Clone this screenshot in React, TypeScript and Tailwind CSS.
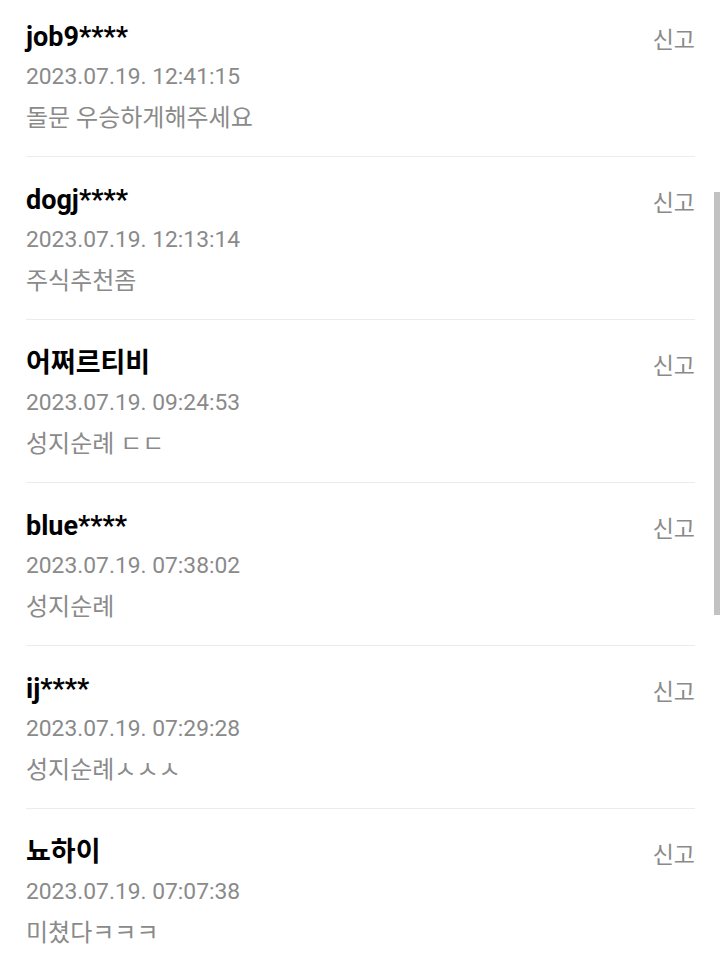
import React from 'react';

interface Comment {
    id: number;
    author: string;
    date: string;
    body: string;
}

const comments: Comment[] = [
    { id: 1, author: 'job9****', date: '2023.07.19. 12:41:15', body: '돌문 우승하게해주세요' },
    { id: 2, author: 'dogj****', date: '2023.07.19. 12:13:14', body: '주식추천좀' },
    { id: 3, author: '어쩌르티비', date: '2023.07.19. 09:24:53', body: '성지순례 ㄷㄷ' },
    { id: 4, author: 'blue****', date: '2023.07.19. 07:38:02', body: '성지순례' },
    { id: 5, author: 'ij****', date: '2023.07.19. 07:29:28', body: '성지순례ㅅㅅㅅ' },
    { id: 6, author: '뇨하이', date: '2023.07.19. 07:07:38', body: '미쳤다ㅋㅋㅋ' },
];

export default function App() {
    return (
        <div className="relative w-[720px] h-[964px] overflow-hidden bg-white font-['Roboto','Noto_Sans_CJK_KR',sans-serif]">
            <ul className="pl-[26px] pr-[25px]">
                {comments.map((c, i) => (
                    <li
                        key={c.id}
                        className={`flex justify-between border-b border-[#ececec] pb-[21px] ${i === 0 ? 'pt-[20px]' : 'pt-[26px]'}`}
                    >
                        <div className="flex flex-col">
                            <span className="text-[27px] leading-[34px] font-bold text-black">{c.author}</span>
                            <span className="mt-[6px] text-[22.8px] leading-[34px] text-[#8a8a8a]">{c.date}</span>
                            <span className="mt-[7px] text-[24px] leading-[34px] text-[#8a8a8a]">{c.body}</span>
                        </div>
                        <button className="self-start mt-[4px] text-[23px] leading-[34px] text-[#8a8a8a]">신고</button>
                    </li>
                ))}
            </ul>
            {/* scroll thumb */}
            <div className="absolute right-0 top-[192px] w-[6px] h-[423px] bg-[#c2c2c2]" />
        </div>
    );
}
